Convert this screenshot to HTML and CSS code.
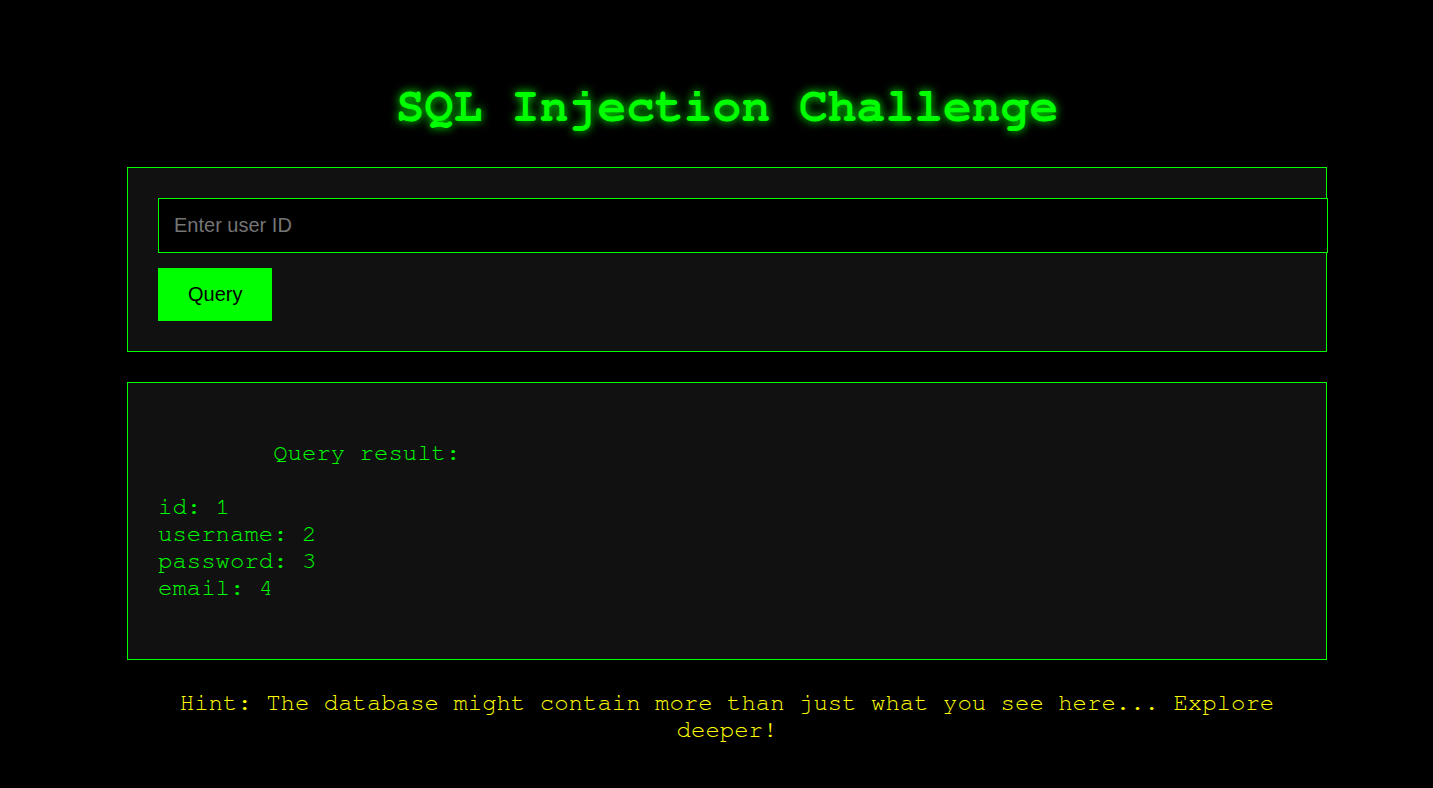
FILE: index.html
```html
<!DOCTYPE html>
<html lang="en">
<head>
<meta charset="utf-8">
<title>SQL Injection Challenge</title>
<link rel="stylesheet" href="styles.css">
</head>
<body>
<div class="container">
  <h1 class="title">SQL Injection Challenge</h1>
  <div class="panel form-panel">
    <input class="user-input" type="text" placeholder="Enter user ID">
    <button class="query-btn" type="button">Query</button>
  </div>
  <div class="panel result-panel"><div class="result">
        Query result:

id: 1
username: 2
password: 3
email: 4
&#8203;</div></div>
  <p class="hint">Hint: The database might contain more than just what you see here... Explore deeper!</p>
</div>
</body>
</html>
```

FILE: styles.css
```css
html, body {
  margin: 0;
  background: #000;
}
body {
  padding: 0 0 0 21px;
  font-family: FreeMono, "Courier New", "Liberation Mono", monospace;
  color: #0f0;
}
.container {
  width: 1200px;
  margin: 0 auto;
  padding-top: 80px;
}
.title {
  margin: 0 0 33px;
  font-size: 48px;
  font-weight: bold;
  text-align: center;
  color: #0f0;
  text-shadow: 0 0 10px #0f0;
  line-height: 54px;
}
.panel {
  box-sizing: border-box;
  border: 1px solid #0f0;
  background: #111;
  padding: 30px;
  margin-bottom: 30px;
}
.user-input {
  display: block;
  width: 100%;
  padding: 15px;
  margin: 0 0 15px;
  border: 1px solid #0f0;
  background: #000;
  color: #0f0;
  font-family: "Liberation Sans", Arial, sans-serif;
  font-size: 20px;
  outline: none;
}
.user-input::placeholder {
  color: #757575;
}
.query-btn {
  display: block;
  padding: 15px 30px;
  border: 0;
  background: #0f0;
  color: #000;
  font-family: "Liberation Sans", Arial, sans-serif;
  font-size: 20px;
  cursor: pointer;
}
.result {
  white-space: pre;
  font-size: 24px;
  line-height: 27px;
  color: #0f0;
}
.hint {
  margin: 0;
  text-align: center;
  font-size: 24px;
  line-height: 27px;
  color: #ff0;
}
```
